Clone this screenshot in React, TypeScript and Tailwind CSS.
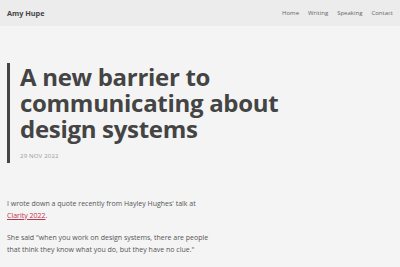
export default function App() {
  const links = ["Home", "Writing", "Speaking", "Contact"];
  return (
    <div className="min-h-[267px] bg-[#f4f4f4] font-['Open_Sans',sans-serif] text-[#555]">
      <header className="flex h-[26px] items-center justify-between bg-[#ececec] px-[7px]">
        <span className="text-[7.3px] font-bold text-[#444]">Amy Hupe</span>
        <nav className="flex gap-[9px] text-[6px] text-[#666]">
          {links.map((l) => (
            <a key={l}>{l}</a>
          ))}
        </nav>
      </header>

      <main className="px-[7px]">
        <div className="mt-[37px] border-l-[3px] border-[#444] pl-[10px] pt-[1px] pb-[2px]">
          <h1 className="text-[24px] font-bold leading-[26px] tracking-[-0.3px] text-[#444]">
            A new barrier to
            <br />
            communicating about
            <br />
            design systems
          </h1>
          <div className="mt-[10px] text-[6px] tracking-[0.2px] text-[#999]">
            29 NOV 2022
          </div>
        </div>

        <p className="mt-[35px] text-[7px] leading-[11.5px]">
          I wrote down a quote recently from Hayley Hughes' talk at
          <br />
          <a className="text-[#c2334d] underline">Clarity 2022</a>.
        </p>
        <p className="mt-[11px] text-[7px] leading-[12px]">
          She said "when you work on design systems, there are people
          <br />
          that think they know what you do, but they have no clue."
        </p>
      </main>
    </div>
  );
}
